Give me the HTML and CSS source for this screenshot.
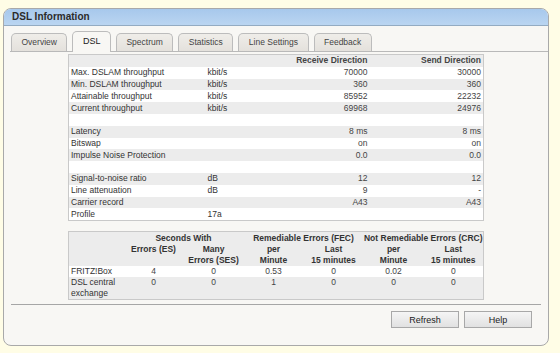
FILE: index.html
```html
<!DOCTYPE html>
<html>
<head>
    <title>DSL Information</title>
    <link rel="stylesheet" href="styles.css">
</head>
<body>
    <div class="box">
        <div class="box-head">DSL Information</div>

        <ul class="tabs">
            <li class="tab">Overview</li>
            <li class="tab active">DSL</li>
            <li class="tab">Spectrum</li>
            <li class="tab">Statistics</li>
            <li class="tab">Line Settings</li>
            <li class="tab">Feedback</li>
        </ul>

        <div class="tab-content">
            <table class="values">
                <colgroup>
                    <col class="c-label">
                    <col class="c-unit">
                    <col class="c-recv">
                    <col class="c-send">
                </colgroup>
                <tr>
                    <th></th>
                    <th></th>
                    <th class="num">Receive Direction</th>
                    <th class="num">Send Direction</th>
                </tr>
                <tr><td>Max. DSLAM throughput</td><td>kbit/s</td><td class="num">70000</td><td class="num">30000</td></tr>
                <tr><td>Min. DSLAM throughput</td><td>kbit/s</td><td class="num">360</td><td class="num">360</td></tr>
                <tr><td>Attainable throughput</td><td>kbit/s</td><td class="num">85952</td><td class="num">22232</td></tr>
                <tr><td>Current throughput</td><td>kbit/s</td><td class="num">69968</td><td class="num">24976</td></tr>
                <tr><td colspan="4">&nbsp;</td></tr>
                <tr><td>Latency</td><td></td><td class="num">8 ms</td><td class="num">8 ms</td></tr>
                <tr><td>Bitswap</td><td></td><td class="num">on</td><td class="num">on</td></tr>
                <tr><td>Impulse Noise Protection</td><td></td><td class="num">0.0</td><td class="num">0.0</td></tr>
                <tr><td colspan="4">&nbsp;</td></tr>
                <tr><td>Signal-to-noise ratio</td><td>dB</td><td class="num">12</td><td class="num">12</td></tr>
                <tr><td>Line attenuation</td><td>dB</td><td class="num">9</td><td class="num">-</td></tr>
                <tr><td>Carrier record</td><td></td><td class="num">A43</td><td class="num">A43</td></tr>
                <tr><td>Profile</td><td>17a</td><td></td><td></td></tr>
            </table>

            <table class="errors">
                <colgroup>
                    <col class="e-label">
                    <col span="6" class="e-val">
                </colgroup>
                <thead>
                    <tr class="group">
                        <th rowspan="2"></th>
                        <th colspan="2">Seconds With</th>
                        <th colspan="2">Remediable Errors (FEC)</th>
                        <th colspan="2">Not Remediable Errors (CRC)</th>
                    </tr>
                    <tr>
                        <th>Errors (ES)</th>
                        <th>Many<br>Errors (SES)</th>
                        <th>per<br>Minute</th>
                        <th>Last<br>15 minutes</th>
                        <th>per<br>Minute</th>
                        <th>Last<br>15 minutes</th>
                    </tr>
                </thead>
                <tbody>
                    <tr>
                        <td>FRITZ!Box</td>
                        <td>4</td><td>0</td><td>0.53</td><td>0</td><td>0.02</td><td>0</td>
                    </tr>
                    <tr class="alt">
                        <td>DSL central exchange</td>
                        <td>0</td><td>0</td><td>1</td><td>0</td><td>0</td><td>0</td>
                    </tr>
                </tbody>
            </table>
        </div>

        <div class="buttons">
            <button>Refresh</button>
            <button>Help</button>
        </div>
    </div>
</body>
</html>
```

FILE: styles.css
```css
body {
    margin: 0;
    padding: 8px 0 0 3px;
    background-color: #fffde6;
    font-family: "Liberation Sans", Arial, sans-serif;
    font-size: 8.5px;
    color: #333;
}
.box {
    width: 544px;
    border: 1px solid #a9a9a9;
    border-radius: 8px;
    background-color: #f8f7f4;
    overflow: hidden;
}
.box-head {
    height: 16px;
    line-height: 16px;
    padding-left: 8px;
    background: linear-gradient(#a7c8ec, #bad5f1);
    border-bottom: 1px solid #93abc2;
    font-size: 10px;
    font-weight: bold;
    color: #2b2b2b;
}
.tabs {
    display: flex;
    align-items: flex-end;
    gap: 5px;
    height: 20px;
    margin: 0 0 0 6px;
    padding: 5px 0 0 1px;
    list-style: none;
    border-bottom: 1px solid #b9b9b9;
}
.tab {
    line-height: 17px;
    padding: 0 9.5px;
    border: 1px solid #bcbcbc;
    border-bottom: none;
    border-radius: 5px 5px 0 0;
    background: linear-gradient(#efede9, #e4e1dc);
    color: #444;
}
.tab.active {
    line-height: 19px;
    padding: 0 9.5px 1px;
    margin-bottom: -1px;
    background: #f8f7f4;
    font-size: 9px;
    color: #222;
}
.tab-content {
    padding-top: 2px;
}
table {
    width: 415px;
    margin: 0 auto;
    border-collapse: collapse;
    border: 1px solid #c9c9c9;
    table-layout: fixed;
    background-color: #fff;
}
.values td,
.values th {
    height: 11.8px;
    padding: 0 2px;
    line-height: 11px;
    text-align: left;
    white-space: nowrap;
}
.values th {
    font-weight: bold;
    color: #333;
}
.values tr:nth-child(odd) {
    background-color: #ececec;
}
.values .num {
    text-align: right;
    color: #444;
}
.c-label { width: 137px; }
.c-unit { width: 85px; }
.c-recv { width: 79px; }
.c-send { width: 114px; }

.errors {
    margin-top: 10px;
}
.e-label { width: 55px; }
.e-val { width: 60px; }
.errors thead {
    background-color: #ececec;
}
.errors th {
    padding: 0;
    line-height: 11px;
    font-weight: bold;
    vertical-align: top;
    color: #333;
}
.errors .group th {
    padding-top: 1px;
}
.errors td {
    padding: 0;
    line-height: 11px;
    text-align: center;
    vertical-align: top;
    color: #444;
}
.errors td:first-child {
    padding-left: 2px;
    text-align: left;
    color: #333;
}
.errors .alt {
    background-color: #ececec;
}
.buttons {
    display: flex;
    justify-content: flex-end;
    gap: 5px;
    margin: 4px 7px 0;
    padding: 6px 9px 17px 0;
    border-top: 1px solid #a6a6a6;
}
button {
    width: 68px;
    height: 17px;
    padding: 0;
    border: 1px solid #a8a8a8;
    background: linear-gradient(#f5f5f5, #e1e1e1);
    font-family: "Liberation Sans", Arial, sans-serif;
    font-size: 9px;
    color: #222;
}
```
